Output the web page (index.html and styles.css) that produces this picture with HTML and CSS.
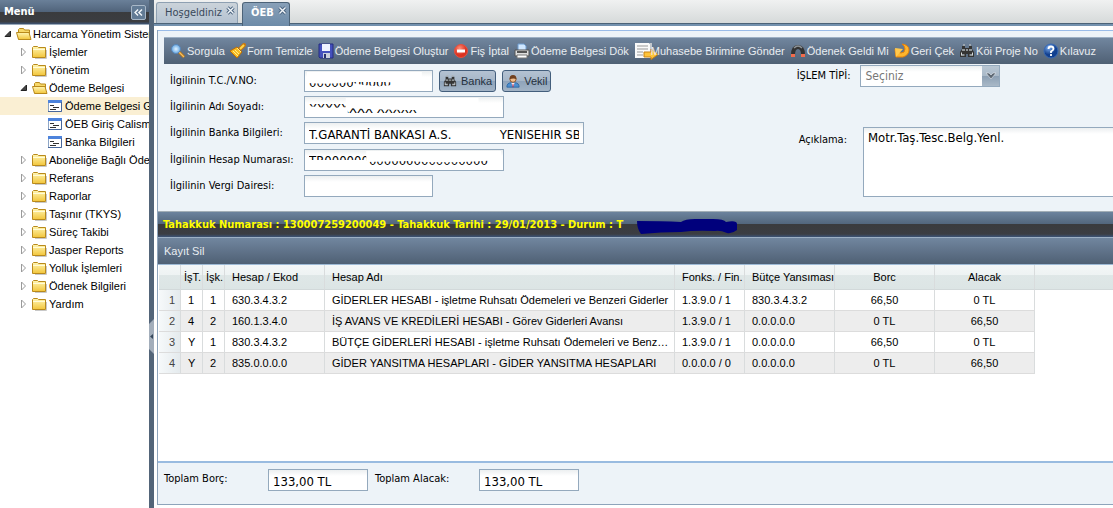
FILE: index.html
```html
<!DOCTYPE html>
<html lang="tr">
<head>
<meta charset="utf-8">
<title>Harcama Yönetim Sistemi</title>
<link rel="stylesheet" href="styles.css">
</head>
<body>
<svg class="defs" aria-hidden="true">
  <defs>
    <linearGradient id="gold" x1="0" y1="0" x2="0" y2="1"><stop offset="0" stop-color="#fff6b4"/><stop offset="1" stop-color="#f2c53a"/></linearGradient>
    <radialGradient id="lens"><stop offset="0" stop-color="#e2f3ff"/><stop offset="1" stop-color="#67a9e4"/></radialGradient>
    <radialGradient id="blue" cx=".35" cy=".25"><stop offset="0" stop-color="#7fb0f0"/><stop offset="1" stop-color="#12408f"/></radialGradient>
    <radialGradient id="red" cx=".4" cy=".3"><stop offset="0" stop-color="#ff8f7a"/><stop offset="1" stop-color="#dc3220"/></radialGradient>
  </defs>
  <symbol id="folder" viewBox="0 0 16 16"><path d="M3 14.5h11.500V6" stroke="#c8c8c8" fill="none"/><path d="M.5 3.500l1-1h4l1 1h7v10H.5z" fill="url(#gold)" stroke="#b98a1c"/><path d="M1 5.500h12" stroke="#fffbd8"/></symbol>
  <symbol id="folder-open" viewBox="0 0 16 16"><path d="M2.500 13V3.500l1-1h4l1 1.500h5V13z" fill="#f7d869" stroke="#b98a1c"/><path d="M.5 6.500h12.500l2 7H2.500z" fill="url(#gold)" stroke="#b98a1c"/></symbol>
  <symbol id="leaf" viewBox="0 0 16 16"><path d="M.5 2.500h13v11H.5z" fill="#fff" stroke="#8ea6c6"/><path d="M0 2h14v3H0z" fill="#4d83dc"/><path d="M2 7.500h4M5 9.500h6M2 11.500h6" stroke="#333"/><path d="M13.500 4v9.500H0" fill="none" stroke="#48679b"/></symbol>
  <symbol id="closed" viewBox="0 0 16 16"><path d="M5.500 4v8l4-4z" fill="#fff" stroke="#9a9a9a"/></symbol>
  <symbol id="opened" viewBox="0 0 16 16"><path d="M10.500 5v5.500H5z" fill="#444" stroke="#222"/></symbol>
  <symbol id="binoc" viewBox="0 0 16 16"><path d="M3 3h3v2h4V3h3v3l2 3v5H9v-3H7v3H1V9l2-3z" fill="#343434"/><path d="M4 2h2M10 2h2M3 7h3M10 7h3M2.500 12h3M10.500 12h3M7 7h2" stroke="#aeb5b9" stroke-width="1.500"/><path d="M2.500 9.500v3M13.500 9.500v3" stroke="#d4d8db"/></symbol>
  <symbol id="close" viewBox="0 0 9 9"><path d="M1.500 1.500l6 6m0-6l-6 6" stroke="#4c6580" stroke-width="3.200"/><path d="M1.500 1.500l6 6m0-6l-6 6" stroke="#f3f7fa" stroke-width="1.400"/></symbol>
</svg>

<div class="app">
  <aside class="sidebar">
    <header class="side-head"><h2>Menü</h2><button class="collapse" aria-label="Menüyü daralt"><svg viewBox="0 0 15 15"><path d="M7 4L3.500 7.500L7 11M11.500 4L8 7.500L11.500 11" fill="none" stroke="#f4f8fb" stroke-width="1.600"/></svg></button></header>
    <ul class="tree">
      <li><svg><use href="#opened"/></svg><svg><use href="#folder-open"/></svg><a href="#">Harcama Yönetim Sistemi</a></li>
      <li class="l1"><svg><use href="#closed"/></svg><svg><use href="#folder"/></svg><a href="#">İşlemler</a></li>
      <li class="l1"><svg><use href="#closed"/></svg><svg><use href="#folder"/></svg><a href="#">Yönetim</a></li>
      <li class="l1"><svg><use href="#opened"/></svg><svg><use href="#folder-open"/></svg><a href="#">Ödeme Belgesi</a></li>
      <li class="l3 selected"><svg><use href="#leaf"/></svg><a href="#">Ödeme Belgesi Giriş</a></li>
      <li class="l3"><svg><use href="#leaf"/></svg><a href="#">ÖEB Giriş Calisma</a></li>
      <li class="l3"><svg><use href="#leaf"/></svg><a href="#">Banka Bilgileri</a></li>
      <li class="l1"><svg><use href="#closed"/></svg><svg><use href="#folder"/></svg><a href="#">Aboneliğe Bağlı Ödemeler</a></li>
      <li class="l1"><svg><use href="#closed"/></svg><svg><use href="#folder"/></svg><a href="#">Referans</a></li>
      <li class="l1"><svg><use href="#closed"/></svg><svg><use href="#folder"/></svg><a href="#">Raporlar</a></li>
      <li class="l1"><svg><use href="#closed"/></svg><svg><use href="#folder"/></svg><a href="#">Taşınır (TKYS)</a></li>
      <li class="l1"><svg><use href="#closed"/></svg><svg><use href="#folder"/></svg><a href="#">Süreç Takibi</a></li>
      <li class="l1"><svg><use href="#closed"/></svg><svg><use href="#folder"/></svg><a href="#">Jasper Reports</a></li>
      <li class="l1"><svg><use href="#closed"/></svg><svg><use href="#folder"/></svg><a href="#">Yolluk İşlemleri</a></li>
      <li class="l1"><svg><use href="#closed"/></svg><svg><use href="#folder"/></svg><a href="#">Ödenek Bilgileri</a></li>
      <li class="l1"><svg><use href="#closed"/></svg><svg><use href="#folder"/></svg><a href="#">Yardım</a></li>
    </ul>
  </aside>
  <div class="splitter"><svg viewBox="0 0 5 35"><path d="M5 0v35L0 30V5z" fill="#a3aebb"/><path d="M4 15v5L1 17.500z" fill="#36485c"/></svg></div>

  <main class="main">
    <nav class="tabs">
      <button class="tab">Hoşgeldiniz<svg><use href="#close"/></svg></button>
      <button class="tab active">ÖEB<svg><use href="#close"/></svg></button>
    </nav>
    <section class="panel">
      <div class="form-area">
        <div class="toolbar">
          <button><svg viewBox="0 0 16 16"><path d="M9 9l5 5" stroke="#b87518" stroke-width="3"/><path d="M9 9l5 5" stroke="#f4c064" stroke-width="1.200"/><circle cx="6" cy="6" r="4.500" fill="url(#lens)" stroke="#5986b8"/></svg>Sorgula</button>
          <button><svg viewBox="0 0 16 16"><path d="M10 6l4-4" stroke="#c87a10" stroke-width="4" stroke-linecap="round"/><path d="M10 6l4-4" stroke="#ffd64b" stroke-width="2"/><path d="M0 8l7-4 5 5-5 6z" fill="#f9bb22" stroke="#bb6d09"/><path d="M3 8l5 5M5 7l4 4M7 5l4 4" stroke="#fff08a"/></svg>Form Temizle</button>
          <button><svg viewBox="0 0 16 16"><path d="M1 1h14v14H2l-1-1z" fill="#4450bd" stroke="#252d80"/><path d="M4 1h8v7H4z" fill="#eef2ff"/><path d="M5 10h7v5H5z" fill="#c9cfde"/><path d="M6 11h2v4H6z" fill="#273070"/></svg>Ödeme Belgesi Oluştur</button>
          <button><svg viewBox="0 0 16 16"><circle cx="8" cy="8" r="6.500" fill="url(#red)" stroke="#e6503f"/><path d="M4 6.500h8v3H4z" fill="#fff"/></svg>Fiş İptal</button>
          <button><svg viewBox="0 0 16 16"><path d="M4 8V1h6l2 2v5" fill="#cfe7ff" stroke="#6e9dd0"/><path d="M1 7h14v6H1z" fill="#dedede" stroke="#555"/><path d="M3 8h10v2H3z" fill="#555"/><path d="M3 12h10v3H3z" fill="#fff" stroke="#777"/></svg>Ödeme Belgesi Dök</button>
          <button class="send"><svg viewBox="0 0 25 18"><path d="M1 1h14l3 3v12H1z" fill="#fafafa"/><path d="M3 4h11M3 7h11M3 10h6M3 13h6" stroke="#999"/><path d="M17 1v11" stroke="#c2c7cc" stroke-width="2"/><path d="M10 10h7V7l7 5.500-7 5V15h-7z" fill="#ffc43a" stroke="#c78212"/></svg><span>Muhasebe Birimine Gönder</span></button>
          <button><svg viewBox="0 0 16 16"><path d="M3 12q0-8 5-8t5 8" fill="none" stroke="#333" stroke-width="4"/><path d="M4 5q4-4 8 0" fill="none" stroke="#8d9397" stroke-width="1.500"/><path d="M1 11h4v3H1zM11 11h4v3h-4z" fill="#f26c4c"/></svg>Ödenek Geldi Mi</button>
          <button><svg viewBox="0 0 16 16"><path d="M8 1q7 1 7 6t-6 7H2L1 6l3 2q1 2 3 2 4 0 4-4 0-3-3-5z" fill="#ffb52d" stroke="#e78209"/><path d="M1 5l8 1-7 8z" fill="#ffc94f"/></svg>Geri Çek</button>
          <button><svg><use href="#binoc"/></svg>Köi Proje No</button>
          <button><svg viewBox="0 0 16 16"><circle cx="8" cy="8" r="7" fill="url(#blue)" stroke="#3769b5"/><path d="M5.500 6q0-2.500 2.500-2.500T10.500 6Q10.500 7 8 8.500V10M8 11v2" fill="none" stroke="#fff" stroke-width="1.800"/></svg>Kılavuz</button>
        </div>
        <form class="form">
          <div class="fields">
            <label for="tc">İlgilinin T.C./V.NO:</label>
            <div class="line"><span class="masked w-s"><input id="tc" value="00000000000"><svg viewBox="0 0 120 18" preserveAspectRatio="none"><path d="M0 0h112v7q-14 5-35 3H45q-20 3-45 1z"/><path d="M45 11q20 5 38 2v5H45z"/></svg></span>
              <button type="button" class="btn"><svg><use href="#binoc"/></svg>Banka</button>
              <button type="button" class="btn"><svg viewBox="0 0 16 16"><path d="M1 15q0-5 5-5h4q5 0 5 5z" fill="#4d8fd0" stroke="#2c67a4"/><path d="M6 10h4l-2 4z" fill="#fff"/><path d="M7.500 11h1v4h-1z" fill="#d23"/><circle cx="8" cy="6" r="3.500" fill="#f1bd8e" stroke="#80481f"/><path d="M4 6q0-5 4-5t4 5q-3-2-8 0" fill="#71401e"/></svg>Vekil</button></div>
            <label for="ad">İlgilinin Adı Soyadı:</label>
            <div class="line"><span class="masked w-m"><input id="ad" value="XXXXXXXX XXXXX"><svg viewBox="0 0 190 18" preserveAspectRatio="none"><path d="M0 8q20 3 40 1v9H0z"/><path d="M38 0h130v10q-50 4-130 0z"/></svg></span></div>
            <label for="banka">İlgilinin Banka Bilgileri:</label>
            <div class="line"><input class="w-l" id="banka" value="T.GARANTİ BANKASI A.S.&#160;&#160;&#160;&#160;&#160;&#160;&#160;&#160;&#160;&#160;&#160;&#160;&#160;YENISEHIR SB"></div>
            <label for="hesap">İlgilinin Hesap Numarası:</label>
            <div class="line"><span class="masked w-m"><input id="hesap" value="TR0000000000000000000000"><svg viewBox="0 0 190 18" preserveAspectRatio="none"><path d="M58 0h132v9q-60 4-90 1l-42 1z"/><path d="M0 9h56l5 2v7H0z"/></svg></span></div>
            <label for="vergi">İlgilinin Vergi Dairesi:</label>
            <div class="line"><input class="w-s" id="vergi"></div>
          </div>
          <div class="extra">
            <div class="pair"><label for="tip">İŞLEM TİPİ:</label><span class="combo"><select id="tip"><option>Seçiniz</option></select><svg viewBox="0 0 17 20"><path d="M4 7h3l2 2 2-2h3l-5 6z" fill="#5d6873" stroke="#e5eaf0" stroke-width=".6"/></svg></span></div>
            <div class="pair note"><label for="aciklama">Açıklama:</label><textarea id="aciklama">Motr.Taş.Tesc.Belg.Yenl.</textarea></div>
          </div>
        </form>
      </div>
      <h3 class="title">Tahakkuk Numarası : 130007259200049 - Tahakkuk Tarihi : 29/01/2013 - Durum : T <svg viewBox="0 0 100 17"><path d="M0 4q25 0 44 1 4-3 14-3h18q11 0 13 3 11-2 11 2v6q-5 4-10 3-7-3-12-2-20-1-34 1-20 0-40 2Q0 12 0 4z" fill="#00007c"/></svg></h3>
      <div class="toolbar sub"><button>Kayıt Sil</button></div>
      <div class="grid">
        <table>
          <colgroup><col class="c-num"><col class="c-xs"><col class="c-xs"><col class="c-code"><col class="c-name"><col class="c-fon"><col class="c-but"><col class="c-amt"><col class="c-amt"><col></colgroup>
          <thead><tr><th></th><th class="tight">İşT.</th><th class="tight">İşk.</th><th>Hesap / Ekod</th><th>Hesap Adı</th><th>Fonks. / Fin.</th><th>Bütçe Yansıması</th><th class="mid">Borc</th><th class="mid">Alacak</th><th class="rest"></th></tr></thead>
          <tbody>
            <tr><td>1</td><td>1</td><td>1</td><td>630.3.4.3.2</td><td>GİDERLER HESABI - işletme Ruhsatı Ödemeleri ve Benzeri Giderler</td><td>1.3.9.0 / 1</td><td>830.3.4.3.2</td><td class="mid">66,50</td><td class="mid">0 TL</td><td class="rest"></td></tr>
            <tr><td>2</td><td>4</td><td>2</td><td>160.1.3.4.0</td><td>İŞ AVANS VE KREDİLERİ HESABI - Görev Giderleri Avansı</td><td>1.3.9.0 / 1</td><td>0.0.0.0.0</td><td class="mid">0 TL</td><td class="mid">66,50</td><td class="rest"></td></tr>
            <tr><td>3</td><td>Y</td><td>1</td><td>830.3.4.3.2</td><td>BÜTÇE GİDERLERİ HESABI - işletme Ruhsatı Ödemeleri ve Benzeri Giderler</td><td>1.3.9.0 / 1</td><td>0.0.0.0.0</td><td class="mid">66,50</td><td class="mid">0 TL</td><td class="rest"></td></tr>
            <tr><td>4</td><td>Y</td><td>2</td><td>835.0.0.0.0</td><td>GİDER YANSITMA HESAPLARI - GİDER YANSITMA HESAPLARI</td><td>0.0.0.0 / 0</td><td>0.0.0.0.0</td><td class="mid">0 TL</td><td class="mid">66,50</td><td class="rest"></td></tr>
          </tbody>
        </table>
      </div>
      <footer class="totals">
        <label for="borc">Toplam Borç:</label><input id="borc" value="133,00 TL">
        <label for="alacak">Toplam Alacak:</label><input id="alacak" value="133,00 TL">
      </footer>
    </section>
  </main>
</div>
</body>
</html>
```
FILE: styles.css
```css
:root {
  --sans: "Liberation Sans", Arial, sans-serif;
  --tahoma: Tahoma, "DejaVu Sans Condensed", "DejaVu Sans", sans-serif;
}
* { box-sizing: border-box; }
body { margin: 0; font: 11px/18px var(--sans); color: #000; background: #fff; }
button { font: inherit; padding: 0; cursor: pointer; }
.defs { position: absolute; width: 0; height: 0; }
h2, h3 { margin: 0; }

.app { display: flex; min-height: 100vh; overflow: hidden; }

.sidebar { flex: none; width: 149px; overflow: hidden; }
.side-head {
  display: flex; align-items: center; justify-content: space-between;
  height: 25px; padding: 0 3px 0 4px;
  background: linear-gradient(#6a8099, #50637a 50%, #3a3b3e 50%, #3b3d41 90%, #3d5374);
  border-bottom: 1px solid #99a9ba;
}
.side-head h2 { font: bold 11px/24px var(--tahoma); color: #fff; }
.collapse { width: 15px; height: 15px; border: 1px solid #a8b8c8; border-radius: 2px; background: #627b95; }
.collapse svg { display: block; width: 13px; height: 13px; }
.tree { margin: 0; padding: 0; list-style: none; }
.tree li { display: flex; align-items: center; height: 18px; white-space: nowrap; }
.tree svg { flex: none; width: 16px; height: 16px; }
.tree a { margin-left: 1px; color: #000; text-decoration: none; }
.tree .l1 { padding-left: 16px; }
.tree .l3 { padding-left: 48px; }
.tree .selected { background: #faefd3; }

.splitter { flex: none; display: flex; align-items: center; width: 5px; background: #536579; padding-top: 164px; }
.splitter svg { width: 5px; height: 35px; }

.main { flex: 1; min-width: 0; display: flex; flex-direction: column; padding: 0 0 3px 3px; }
.tabs {
  display: flex; align-items: flex-end; gap: 4px;
  height: 26px; margin-left: -3px; padding: 0 2px;
  background: linear-gradient(#f0f1f1, #d6dada 23px, #4c6378 23px, #4c6378 24px, #7391ae 24px);
}
.tab {
  display: flex; gap: 4px; height: 21px; margin-bottom: 3px; padding: 0 2px 0 8px;
  border: 1px solid #8ea0b2; border-bottom: 0; border-radius: 3px 3px 0 0;
  background: linear-gradient(#cbd3da, #b4c2d1); color: #38485a;
  font: 11px/20px var(--tahoma);
}
.tab svg { width: 9px; height: 9px; margin-top: 3px; }
.tab.active { height: 24px; margin-bottom: 0; border-color: #4c6378; background: linear-gradient(#88a0b8, #6d8ba8); color: #fff; font-weight: bold; }

.panel { flex: 1; display: flex; flex-direction: column; margin-top: 4px; border: solid #8ea4bb; border-width: 0 0 1px 1px; }
.form-area { padding: 6px 0 0 6px; background: #edf3f8; border-top: 1px solid #99bbe8; border-bottom: 1px solid #a2aeb6; }
.toolbar {
  display: flex; align-items: center; gap: 5px; height: 27px; padding: 0 6px;
  background: linear-gradient(#71869f, #4f6074); border-top: 1px solid #9db0c4; overflow: hidden;
}
.toolbar button { flex: none; display: flex; align-items: center; gap: 1px; border: 0; background: none; color: #e9edf1; white-space: nowrap; }
.toolbar svg { width: 16px; height: 16px; }
.toolbar .send { position: relative; padding-left: 17px; }
.toolbar .send svg { position: absolute; left: 0; width: 25px; height: 18px; }
.toolbar .send span { position: relative; }
.toolbar.sub { height: 28px; border-bottom: 1px solid #9db9d4; }

label { font: 11px/22px var(--tahoma); white-space: nowrap; }
input, textarea, select {
  height: 22px; margin: 0; padding: 3px 4px 1px; border: 1px solid #94a9bd; border-radius: 0; outline: 0;
  background: #fff linear-gradient(#eceff0, #fff 6px) no-repeat;
  font: 13px/16px var(--tahoma); color: #000;
}
.form { display: grid; grid-template-columns: minmax(0, 2fr) minmax(0, 1fr); padding: 1px 0 14px 6px; }
.fields { display: grid; grid-template-columns: 134px 1fr; gap: 4px 0; padding-top: 5px; }
.line { display: flex; gap: 6px; }
.w-s { width: 129px; }
.w-m { width: 200px; }
.w-l { width: 280px; }
.masked { position: relative; display: block; }
.masked input { width: 100%; display: block; }
.masked svg { position: absolute; left: 3px; top: 2px; width: calc(100% - 6px); height: 18px; fill: #fff; }
.btn {
  display: flex; align-items: center; gap: 4px; height: 22px; padding: 0 3px;
  border: 1px solid #435e7c; border-radius: 3px; color: #26313d;
  background: linear-gradient(#b4c2d2, #a5b6c8 50%, #8ea3ba 50%, #a2b3c5);
}
.btn svg { width: 14px; height: 14px; }
.pair { display: flex; gap: 10px; }
.extra { margin-left: -2px; }
.combo { position: relative; width: 140px; }
.combo select { width: 100%; display: block; appearance: none; padding: 2px 4px; font-size: 12px; color: #777; }
.combo svg { position: absolute; right: 1px; top: 1px; width: 17px; height: 20px; background: linear-gradient(#b8c6d3, #a9b9c8 50%, #8c9fb3 50%, #a9b8c7); pointer-events: none; }
.note { margin-top: 40px; gap: 16px; padding-left: 2px; }
.note label { padding-top: 2px; }
.note textarea { flex: 1; min-width: 0; height: 70px; border-right: 0; padding-top: 2px; resize: none; }

.title {
  height: 25px; padding-left: 5px; font: bold 11px/26px var(--tahoma); color: #ff0; white-space: nowrap;
  background: linear-gradient(#6c839d, #51657b 50%, #3a3b3e 50%, #3b3d42 88%, #3c5376);
}
.title svg { width: 100px; height: 17px; margin-left: 10px; vertical-align: middle; }

.grid { flex: 1; padding-left: 1px; }
table { width: 100%; table-layout: fixed; border-collapse: separate; border-spacing: 0; }
.c-num, .c-xs { width: 22px; }
.c-code { width: 100px; }
.c-name { width: 350px; }
.c-fon { width: 70px; }
.c-but { width: 90px; }
.c-amt { width: 100px; }
th, td { padding: 0 0 0 7px; text-align: left; font-weight: normal; white-space: nowrap; overflow: hidden; text-overflow: ellipsis; border-right: 1px solid #d9dcdd; }
th { height: 24px; text-overflow: clip; line-height: 24px; background: linear-gradient(#f3f6f7, #eef3f3 40%, #dfe7e7 40%, #dce5e5); border-bottom: 1px solid #d2d9da; }
th.tight { padding-left: 3px; }
td { height: 21px; line-height: 20px; border-bottom: 1px solid #dcdcdc; }
td:nth-child(-n+3) { text-overflow: clip; }
tbody tr:nth-child(even) td { background: #ededed; }
tbody tr td:first-child { padding-left: 10px; color: #444; background: linear-gradient(90deg, #f6f9fa, #e4eaed); }
th.mid, td.mid { padding: 0; text-align: center; }
th.rest, tbody tr td.rest { border-right: 0; }
tbody tr td.rest { border-bottom: 0; background: #fff; }

.totals { display: grid; grid-template-columns: 104px 100px 111px 100px; align-items: start; padding: 6px 0 13px 6px; background: #edf3f8; border-top: 2px solid #99bbe0; }
.totals label + input + label { padding-left: 7px; }
.totals input { width: 100px; }
.totals label { line-height: 20px; }
```
